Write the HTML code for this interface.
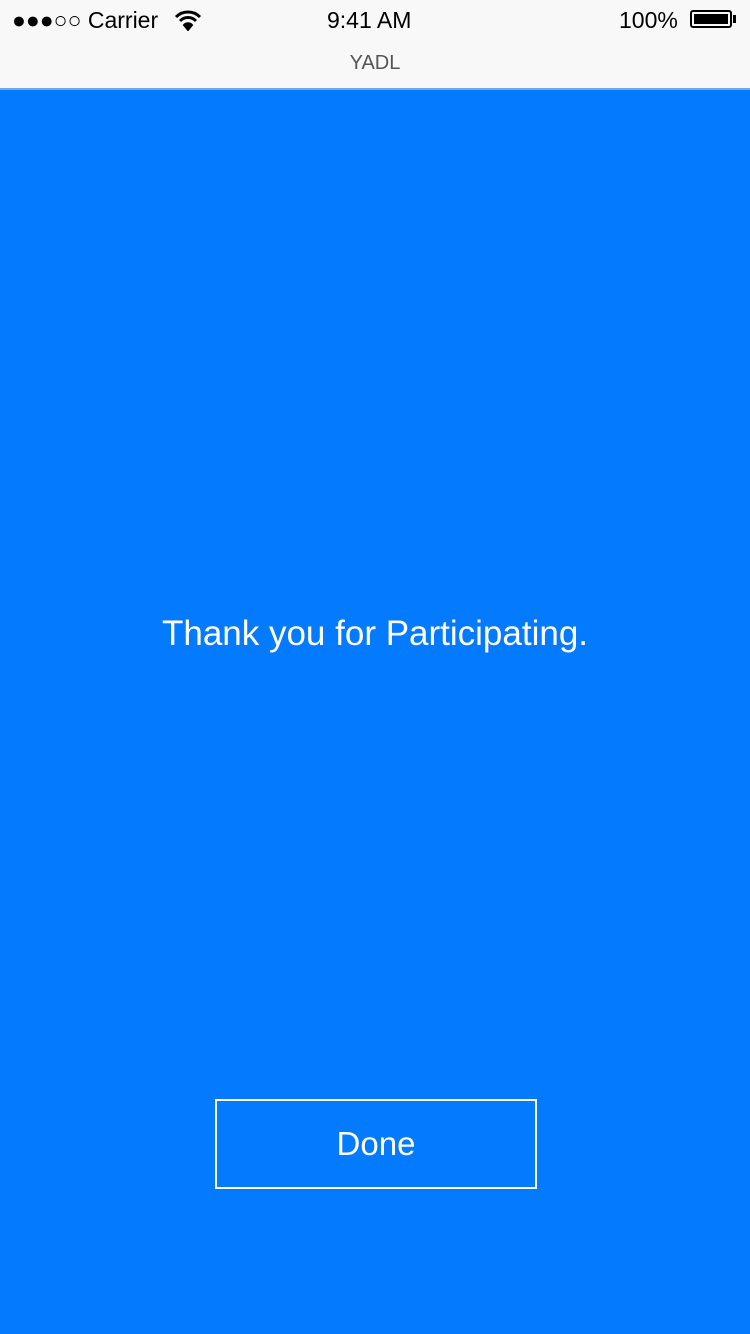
<!DOCTYPE html>
<html><head><meta charset="utf-8"><style>
html,body{margin:0;padding:0;width:750px;height:1334px;overflow:hidden;font-family:"Liberation Sans",sans-serif}
.top{position:absolute;left:0;top:0;width:750px;height:88px;background:#f8f8f8}
.sb{position:absolute;top:5px;font-size:23px;color:#000;line-height:30px}
.title{position:absolute;top:52px;width:750px;text-align:center;font-size:20px;color:#555}
.line{position:absolute;top:88px;left:0;width:750px;height:2px;background:#6aaaf0}
.blue{position:absolute;top:90px;left:0;width:750px;height:1244px;background:#047aff}
.msg{position:absolute;top:614px;width:750px;text-align:center;color:#fff;font-size:35px;line-height:40px}
.btn{position:absolute;left:215px;top:1099px;width:318px;height:86px;border:2px solid #fff;color:#fff;font-size:33px;text-align:center;line-height:86px}
</style></head><body>
<div class="top">
<div class="sb" style="left:12px">●●●○○ Carrier</div>
<svg style="position:absolute;left:174px;top:9px" width="28" height="22" viewBox="0 0 28 22"><path d="M2 8 A17 17 0 0 1 26 8" stroke="#000" stroke-width="3" fill="none"/><path d="M6 12 A11 11 0 0 1 22 12" stroke="#000" stroke-width="3" fill="none"/><path d="M10 16 A5.5 5.5 0 0 1 18 16 L14 21 Z" fill="#000" stroke="#000" stroke-width="2"/></svg>
<div class="sb" style="left:327px">9:41 AM</div>
<div class="sb" style="left:619px">100%</div>
<div style="position:absolute;left:690px;top:10px;width:42px;height:18px;border:2px solid #000;border-radius:3px;box-sizing:border-box;padding:2px"><div style="background:#000;width:100%;height:100%"></div></div>
<div style="position:absolute;left:733px;top:15px;width:3px;height:8px;background:#000"></div>
<div class="title">YADL</div>
</div>
<div class="line"></div>
<div class="blue"></div>
<div class="msg">Thank you for Participating.</div>
<div class="btn">Done</div>
</body></html>
